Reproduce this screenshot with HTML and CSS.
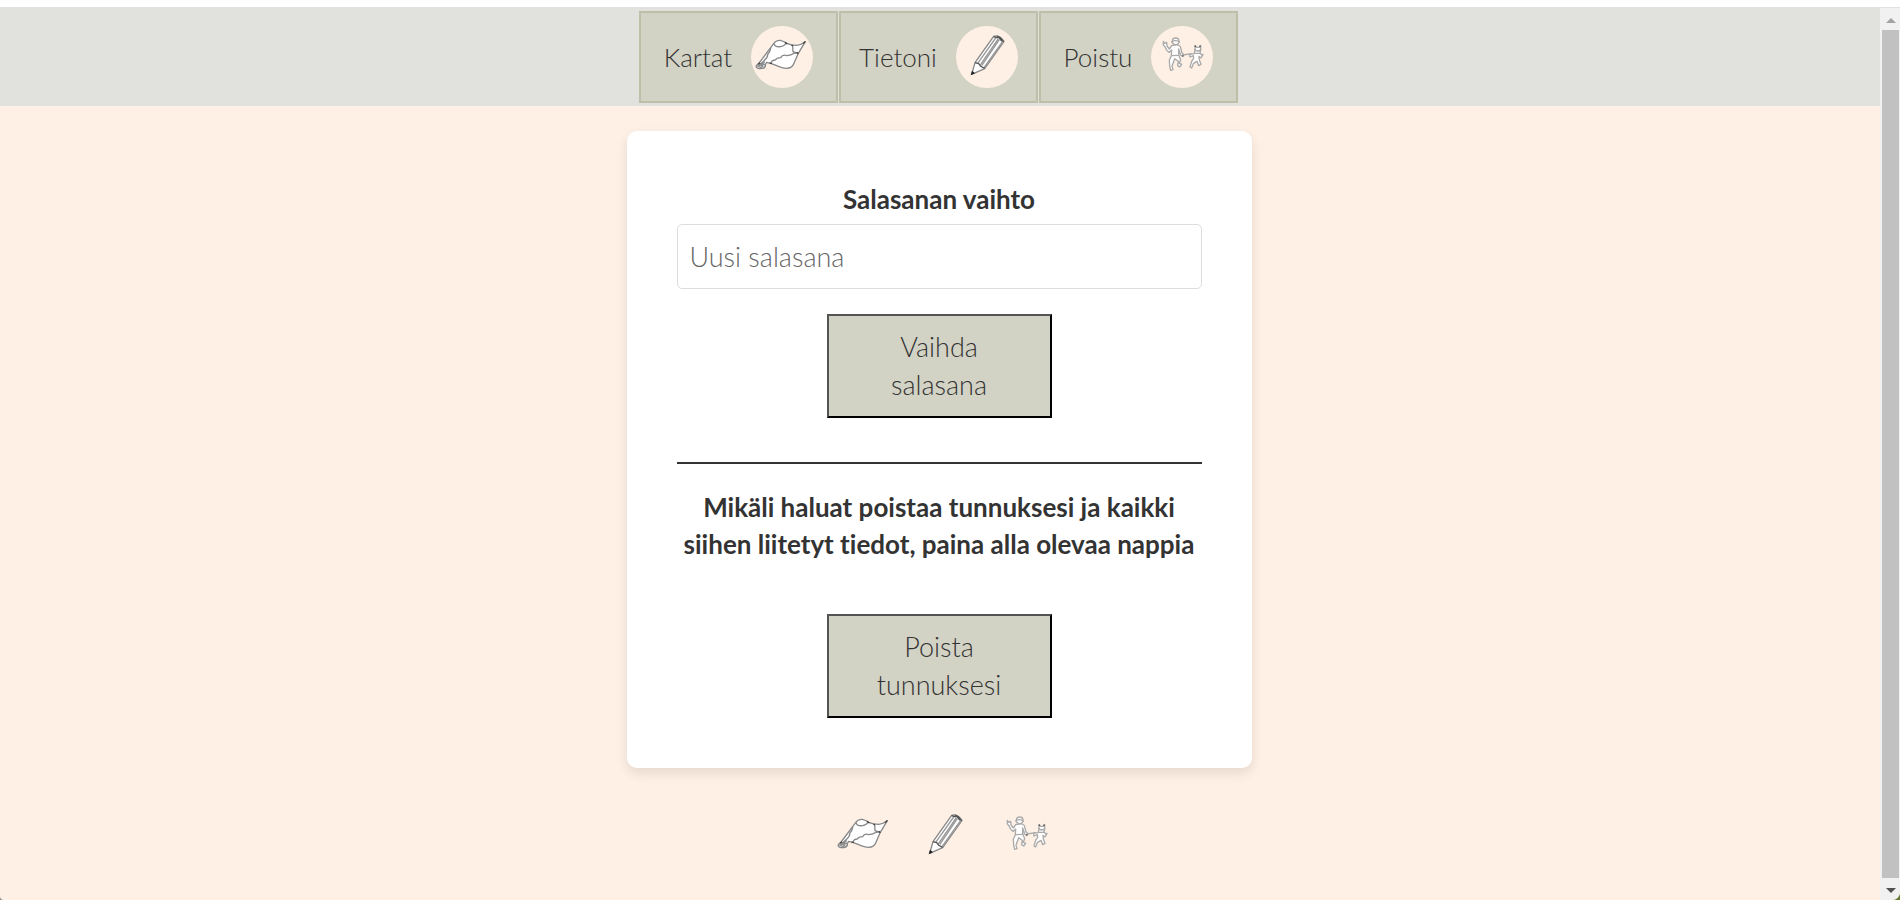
FILE: index.html
```html
<!DOCTYPE html>
<html lang="fi">
<head>
<meta charset="utf-8">
<title>Tietoni</title>
<link rel="stylesheet" href="styles.css">
</head>
<body>
<svg class="sprites" aria-hidden="true">
  <symbol id="map" viewBox="33 18 186 186">
    <g fill="#fff" stroke="#888" stroke-width="4" stroke-linejoin="round" stroke-linecap="round">
      <path d="M55 132 L101 71 Q108 60 121 61 Q134 64 142 71 Q154 76 170 76 Q184 74 196 65 L175 100 L160 134 Q154 145 140 145 C118 145 104 131 80 127 L69 144 Z"/>
      <path d="M102 71 Q104 82 122 80 Q138 76 137 68 M158 76 L159 95 L175 100 M92 85 Q91 94 83 103 Q84 112 72 122 L62 132 M94 129 Q95 120 106 120 Q110 113 122 113 Q128 102 140 107 Q154 106 162 100 Q170 98 175 100" fill="none"/>
      <path d="M49 137 Q53 129 67 132 Q78 132 76 139 Q72 147 57 146 Q47 144 49 137 Z" fill="#ddd"/>
      <path d="M54 139 Q63 132 68 138 Q65 144 58 141 M64 133 L73 126" fill="none"/>
    </g>
    <path d="M196 64 L190 71 M135 67 L142 72 M154 76 L159 77 M55 133 L60 128 M89 129 L95 131 M170 97 L175 101" stroke="#444" stroke-width="4" fill="none"/>
  </symbol>
  <symbol id="pencil" viewBox="33 18 186 186">
    <path d="M146 49 Q162 43 177 64 L119 146 L80 163 L90 128 Z" fill="#fff" stroke="#888" stroke-width="4" stroke-linejoin="round"/>
    <path d="M152 54 L98 130 M160 56 L105 136 M163 59 L110 137 M173 64 L117 143" stroke="#999" stroke-width="4" fill="none"/>
    <path d="M146 49 L153 53 L162 53 L169 62 L177 64 M90 128 L101 131 L107 139 L119 145 M155 48 L166 53 L173 61" stroke="#555" stroke-width="4" fill="none"/>
    <path d="M77 166 L81 152 L90 160 Z" fill="#222"/>
  </symbol>
  <symbol id="walkers" viewBox="36 18 186 186">
    <g fill="#fff" stroke="#aaa" stroke-width="4" stroke-linejoin="round" stroke-linecap="round">
      <path d="M98 77 L91 87 L84 78 L83 67 L77 70 L73 64 L73 75 L78 80 Q82 93 91 97 L98 90 L97 108 L91 120 L92 138 L95 151 L102 149 L99 139 L107 116 L118 124 L116 137 L122 141 L128 133 L121 130 L125 119 L119 105 L119 87 L125 105 L132 110 L134 103 L129 99 L124 80 Q119 74 109 75 Z"/>
      <circle cx="110" cy="64" r="10"/>
      <path d="M98 66 Q108 58 121 66 M98 107 L119 106" fill="none"/>
      <path d="M132 105 L158 101" fill="none"/>
      <path d="M168 88 L168 76 L173 82 L181 82 L185 76 L185 89 L183 99 L190 107 L192 103 L186 114 L180 109 L181 120 L186 133 L179 137 L174 124 L163 131 L158 144 L153 141 L158 124 L164 115 L163 107 L153 111 L152 103 L166 101 Z"/>
      <path d="M168 89 Q176 97 185 89 M167 100 L184 100" fill="none"/>
    </g>
    <path d="M168 77 L170 81 M184 77 L182 81 M130 107 L133 108" stroke="#555" stroke-width="4" fill="none"/>
  </symbol>
</svg>
<div class="window">
  <div class="page">
    <nav class="nav">
      <a class="nav-link" href="#kartat">Kartat <svg class="icon round"><use href="#map"/></svg></a>
      <a class="nav-link" href="#tietoni">Tietoni <svg class="icon round"><use href="#pencil"/></svg></a>
      <a class="nav-link" href="#poistu">Poistu <svg class="icon round"><use href="#walkers"/></svg></a>
    </nav>
    <main class="card">
      <form class="form">
        <label class="heading" for="password">Salasanan vaihto</label>
        <input class="field" id="password" type="password" placeholder="Uusi salasana">
        <button class="button" type="button">Vaihda salasana</button>
      </form>
      <hr class="rule">
      <p class="heading notice">Mikäli haluat poistaa tunnuksesi ja kaikki siihen liitetyt tiedot, paina alla olevaa nappia</p>
      <button class="button" type="button">Poista tunnuksesi</button>
    </main>
    <footer class="footer">
      <svg class="icon"><use href="#map"/></svg>
      <svg class="icon"><use href="#pencil"/></svg>
      <svg class="icon"><use href="#walkers"/></svg>
    </footer>
  </div>
  <div class="scrollbar" aria-hidden="true">
    <span class="arrow up"></span>
    <span class="thumb"></span>
    <span class="arrow down"></span>
  </div>
</div>
</body>
</html>
```
FILE: styles.css
```css
* { box-sizing: border-box; }

html { background: linear-gradient(90deg, #8a8a8a, #5f7a35); }

body {
  margin: 0;
  color: #333;
  font-family: Lato, "Open Sans", sans-serif;
  font-size: 27px;
  font-weight: 300;
  font-variant-ligatures: none;
  line-height: 38px;
}

.sprites { position: absolute; width: 0; height: 0; }

.window {
  display: flex;
  min-height: 100vh;
  border-top: 7px solid #fff;
  border-radius: 0 0 8px 4px;
  background: #fff0e5;
  overflow: hidden;
}

.page {
  flex: 1;
  display: flex;
  flex-direction: column;
  align-items: center;
}

.nav {
  align-self: stretch;
  display: flex;
  justify-content: center;
  gap: 1px;
  padding: 4px 3px 3px 0;
  background: #e1e2dd;
}

.nav-link {
  display: flex;
  align-items: center;
  justify-content: center;
  gap: 19px;
  width: 199px;
  height: 92px;
  border: 2px solid #bdbfa9;
  background: #d2d2c5;
  color: inherit;
  font-size: 26px;
  text-decoration: none;
}

.icon { width: 62px; height: 62px; }

.round { border-radius: 50%; background: #fff0e5; }

.card {
  display: flex;
  flex-direction: column;
  align-items: center;
  width: 625px;
  max-width: 100%;
  margin: 25px 2px 0 0;
  padding: 50px;
  border-radius: 10px;
  background: #fff;
  box-shadow: 0 5px 12px rgba(0, 0, 0, 0.1);
}

.form {
  align-self: stretch;
  display: flex;
  flex-direction: column;
  align-items: center;
}

.heading {
  margin: 0;
  font-size: 26px;
  font-weight: 700;
  line-height: 37px;
  text-align: center;
}

.field {
  width: 100%;
  height: 65px;
  margin: 6px 0 25px;
  padding: 0 12px;
  border: 1px solid #ddd;
  border-radius: 5px;
  font: inherit;
}

.field::placeholder { color: #666; }

.button {
  width: 225px;
  padding: 12px 40px;
  border: 2px outset #000;
  background: #d2d2c5;
  color: inherit;
  font: inherit;
}

.rule {
  align-self: stretch;
  margin: 44px 0 25px;
  border: 0;
  border-top: 2px solid #333;
}

.notice { margin-bottom: 51px; }

.footer {
  display: flex;
  gap: 19px;
  padding: 37px 0 32px 10px;
}

.scrollbar {
  display: flex;
  flex-direction: column;
  align-items: center;
  gap: 7px;
  width: 20px;
  padding: 10px 1px 7px 2px;
  border-top: 1px solid #e1e2dd;
  background: #f1f1f1;
}

.thumb { flex: 1; width: 17px; background: #c1c1c1; }

.arrow { border: 5px solid transparent; }
.up { border-top: 0; border-bottom-color: #a3a3a3; }
.down { margin-top: 3px; border-bottom: 0; border-top-color: #505050; }
```
